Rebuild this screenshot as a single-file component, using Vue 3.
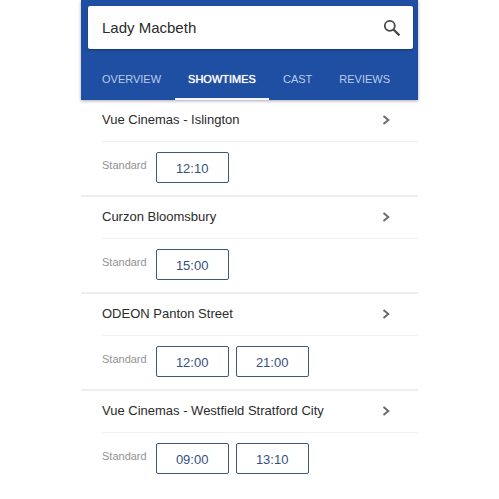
<script setup>
import { ref } from 'vue'

const query = ref('Lady Macbeth')
const tabs = ['OVERVIEW', 'SHOWTIMES', 'CAST', 'REVIEWS']
const activeTab = ref('SHOWTIMES')
const cinemas = [
  { name: 'Vue Cinemas - Islington', times: ['12:10'] },
  { name: 'Curzon Bloomsbury', times: ['15:00'] },
  { name: 'ODEON Panton Street', times: ['12:00', '21:00'] },
  { name: 'Vue Cinemas - Westfield Stratford City', times: ['09:00', '13:10'] }
]
</script>

<template>
  <main class="panel">
    <header class="header">
      <form class="search" @submit.prevent>
        <input v-model="query" class="search-input" type="text" aria-label="Search" />
        <button class="search-button" type="submit" aria-label="Submit search">
          <svg viewBox="0 0 18 18" width="18" height="18" fill="none" stroke="#484848">
            <circle cx="6.8" cy="6.8" r="5" stroke-width="1.8" />
            <path d="M10.5 10.5L16.4 16.4" stroke-width="2.3" />
          </svg>
        </button>
      </form>
      <nav class="tabs">
        <button
          v-for="tab in tabs"
          :key="tab"
          type="button"
          class="tab"
          :class="{ active: tab === activeTab }"
          @click="activeTab = tab"
        >{{ tab }}</button>
      </nav>
    </header>
    <section v-for="cinema in cinemas" :key="cinema.name" class="cinema">
      <a class="cinema-link" href="#">
        <span>{{ cinema.name }}</span>
        <svg viewBox="0 0 8 10" width="8" height="10" fill="none" stroke="#6b6b6b" stroke-width="2">
          <path d="M1.5 1L6.3 5L1.5 9" />
        </svg>
      </a>
      <div class="showings">
        <span class="format">Standard</span>
        <button v-for="time in cinema.times" :key="time" type="button" class="time">{{ time }}</button>
      </div>
    </section>
  </main>
</template>

<style>
body {
  margin: 0;
  background: #fff;
}
</style>

<style scoped>
.panel {
  box-sizing: border-box;
  width: 100%;
  max-width: 337px;
  margin: 0 auto;
  font-family: "Liberation Sans", Arial, sans-serif;
  color: #2b2b2b;
}
button,
input {
  margin: 0;
  padding: 0;
  border: 0;
  background: none;
  font-family: inherit;
}
.header {
  position: relative;
  padding: 6px 5px 0 7px;
  background: #1f4fa3;
  box-shadow: 0 1px 3px rgba(40, 40, 70, 0.4);
}
.search {
  display: flex;
  align-items: center;
  height: 43px;
  padding: 0 12px 0 14px;
  border-radius: 2px;
  background: #fff;
  box-shadow: 0 1px 2px rgba(0, 0, 0, 0.35);
}
.search-input {
  flex: 1;
  min-width: 0;
  height: 24px;
  font-size: 15px;
  color: #2b2b2b;
  outline: none;
}
.search-button {
  display: flex;
}
.tabs {
  display: flex;
  gap: 1px;
  height: 51px;
  padding-left: 1px;
}
.tab {
  padding: 10px 13px 0;
  border-bottom: 2px solid transparent;
  font-size: 11px;
  color: #bccbe8;
}
.tab.active {
  border-bottom-color: #f4f6fb;
  color: #fff;
  text-shadow: 0 0 1px #fff;
}
.cinema + .cinema {
  border-top: 2px solid #eeeeef;
}
.cinema-link {
  box-sizing: border-box;
  display: flex;
  align-items: center;
  justify-content: space-between;
  height: 42px;
  margin-left: 21px;
  padding: 0 28px 2px 0;
  border-bottom: 1px solid #f0f0f1;
  font-size: 13px;
  color: inherit;
  text-decoration: none;
}
.showings {
  display: flex;
  align-items: center;
  gap: 7px;
  padding: 10px 21px 12px;
}
.format {
  padding-bottom: 5px;
  margin-right: 2px;
  font-size: 11px;
  color: #929292;
}
.time {
  box-sizing: border-box;
  width: 73px;
  height: 31px;
  padding-top: 1px;
  border: 1px solid #3f5878;
  border-radius: 2px;
  font-size: 13px;
  color: #344f80;
}
</style>
